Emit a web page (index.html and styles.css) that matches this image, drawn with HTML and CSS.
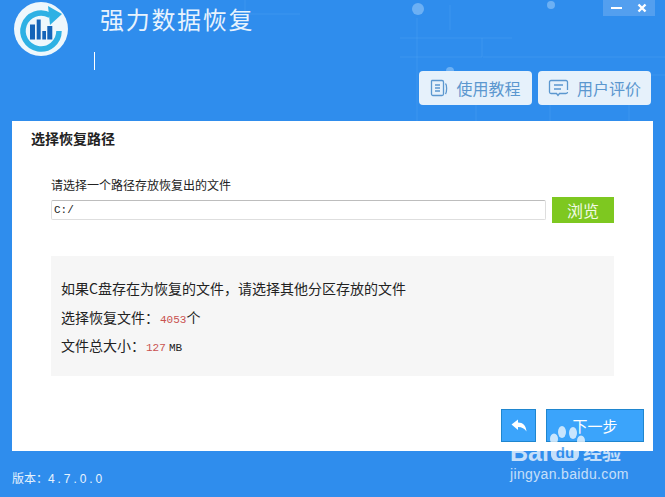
FILE: index.html
```html
<!DOCTYPE html>
<html lang="zh-CN">
<head>
    <meta charset="UTF-8">
    <title>强力数据恢复</title>
    <link rel="stylesheet" href="styles.css">
</head>
<body>
    <div class="app">
        <!-- background circuit lines -->
        <svg class="header-bg" width="665" height="121" viewBox="0 0 665 121" fill="none">
            <g stroke="#5aa6f2" stroke-width="1" opacity="0.35">
                <path d="M417 18V121M400 38H512M400 57H482V38M483 57H665M450 5V30M650 75H665M476 105V121M550 105V121M629 105V121M245 0V14H300"/>
            </g>
            <circle cx="418" cy="9" r="6" fill="#6cb0f4"/>
            <circle cx="551" cy="5" r="4" fill="#6cb0f4"/>
            <circle cx="450" cy="71" r="4" fill="#6cb0f4"/>
        </svg>
        <span class="spark"></span>

        <header class="top">
            <div class="brand">
                <svg class="logo" width="54" height="54" viewBox="0 0 54 54">
                    <circle cx="27" cy="27" r="27" fill="#eef7fc"/>
                    <path d="M45 29A18 18 0 1 1 36 13.400" fill="none" stroke="#2eb1e4" stroke-width="5.500"/>
                    <path d="M34 4L48 12L36 23Z" fill="#2eb1e4"/>
                    <path d="M16 22.500h5v15h-5zM22.700 17.500h4v20h-4zM28.300 29h3.700v8.500h-3.700zM33.300 24h5v13.500h-5z" fill="#1464b8"/>
                </svg>
                <h1>强力数据恢复</h1>
            </div>
            <div class="top-right">
                <div class="win-btns">
                    <span class="win-min"></span>
                    <svg width="10" height="10" viewBox="0 0 10 10">
                        <path d="M1.500 1.500L8.500 8.500M8.500 1.500L1.500 8.500" stroke="#fff" stroke-width="2.400"/>
                    </svg>
                </div>
                <div class="top-links">
                    <a class="top-link">
                        <svg width="18" height="18" viewBox="0 0 18 18" fill="none" stroke="#5b97cf" stroke-width="1.300">
                            <path d="M2 1.500H12A1.500 1.500 0 0 1 13.500 3V15A1.500 1.500 0 0 1 12 16.500H3A1.500 1.500 0 0 1 1.500 15V2Z"/>
                            <path d="M5 6H10M5 9H10M5 12H10M15.500 4.500C17 6 17 13 15.500 15"/>
                        </svg>
                        使用教程
                    </a>
                    <a class="top-link">
                        <svg width="21" height="18" viewBox="0 0 21 18" fill="none" stroke="#5b97cf" stroke-width="1.300">
                            <path d="M19.500 11V3A1.500 1.500 0 0 0 18 1.500H3A1.500 1.500 0 0 0 1.500 3V13A1.500 1.500 0 0 0 3 14.500H8.500L10 16.500L11.500 14.500H18A1.500 1.500 0 0 0 19.500 13"/>
                            <path d="M6 6H15M6 10H13"/>
                        </svg>
                        用户评价
                    </a>
                </div>
            </div>
        </header>

        <main class="panel">
            <h2>选择恢复路径</h2>
            <section class="path-section">
                <label class="path-label">请选择一个路径存放恢复出的文件</label>
                <div class="path-row">
                    <div class="path-input">C:/</div>
                    <button class="browse-btn">浏览</button>
                </div>
            </section>
            <section class="info-box">
                <p>如果C盘存在为恢复的文件，请选择其他分区存放的文件</p>
                <p>选择恢复文件：<span class="num">4053</span>个</p>
                <p>文件总大小：<span class="num">127</span> <span class="unit">MB</span></p>
            </section>
            <div class="actions">
                <button class="btn back-btn">
                    <svg width="16" height="13" viewBox="0 0 16 13">
                        <path d="M0.500 5.500L7 0.500V3.500C12 3.500 15 6.500 15.500 12.500C13.500 9.500 11 8 7 8V11Z" fill="#fff"/>
                    </svg>
                </button>
                <button class="btn next-btn">下一步</button>
            </div>
        </main>

        <footer class="bottom">版本：<span class="version">4.7.0.0</span></footer>

        <!-- watermark -->
        <div class="watermark">
            <svg class="paw" width="40" height="24" viewBox="0 0 40 24" fill="#fff">
                <ellipse cx="6" cy="14" rx="4" ry="5.500"/>
                <ellipse cx="14" cy="7" rx="4" ry="6"/>
                <ellipse cx="25" cy="8" rx="4" ry="6"/>
                <ellipse cx="33" cy="16" rx="4" ry="5.500"/>
            </svg>
            <div class="wm-logo">Bai<b>du</b><span>经验</span></div>
            <div class="wm-url">jingyan.baidu.com</div>
        </div>
    </div>
</body>
</html>
```

FILE: styles.css
```css
body {
    margin: 0;
    font-family: "Noto Sans CJK SC", "Liberation Sans", sans-serif;
}

.app {
    position: relative;
    width: 665px;
    height: 497px;
    overflow: hidden;
    background: #2f8ded;
    display: flex;
    flex-direction: column;
}

.header-bg {
    position: absolute;
    top: 0;
    left: 0;
}

.spark {
    position: absolute;
    left: 94px;
    top: 52px;
    width: 1px;
    height: 18px;
    background: #fff;
}

/* header */
.top {
    position: relative;
    height: 121px;
    display: flex;
    justify-content: space-between;
}

.brand {
    display: flex;
    align-items: flex-start;
    padding: 2px 0 0 14px;
}

.logo {
    flex: none;
}

.brand h1 {
    margin: 0 0 0 32px;
    font-size: 24px;
    line-height: 34px;
    font-weight: 400;
    letter-spacing: 1.700px;
    color: #e8f3fd;
}

.top-right {
    display: flex;
    flex-direction: column;
    align-items: flex-end;
    padding-right: 14px;
}

.win-btns {
    width: 52px;
    height: 16px;
    margin-right: -4px;
    padding: 0 6px 0 8px;
    box-sizing: border-box;
    display: flex;
    align-items: center;
    justify-content: space-between;
    background: #539fef;
}

.win-min {
    width: 11px;
    height: 2px;
    background: #fff;
}

.win-btns svg {
    margin-right: 2px;
}

.top-links {
    display: flex;
    gap: 6px;
    margin-top: 55px;
}

.top-link {
    width: 113px;
    height: 34px;
    display: flex;
    align-items: center;
    justify-content: center;
    gap: 8px;
    background: #e6f1fb;
    border-radius: 4px;
    font-size: 16px;
    color: #5b97cf;
}

/* white panel */
.panel {
    position: relative;
    width: 641px;
    height: 330px;
    margin-left: 12px;
    box-sizing: border-box;
    padding: 8px 9px 0 39px;
    background: #fff;
    color: #222;
}

.panel h2 {
    margin: 0 0 0 -20px;
    font-size: 14px;
    line-height: 18px;
    font-weight: 700;
}

.path-section {
    margin-top: 30px;
}

.path-label {
    display: block;
    font-size: 12px;
    line-height: 16px;
}

.path-row {
    display: flex;
    align-items: center;
    gap: 6px;
    margin-top: 4px;
}

.path-input {
    width: 495px;
    height: 20px;
    box-sizing: border-box;
    padding-left: 2px;
    border: 1px solid #dedede;
    border-top-color: #bdbdbd;
    border-radius: 2px;
    font-family: "Liberation Mono", monospace;
    font-size: 11px;
    line-height: 18px;
}

.browse-btn {
    width: 62px;
    height: 26px;
    padding: 0;
    border: none;
    background: #7ec820;
    color: #f2fae6;
    font-family: inherit;
    font-size: 16px;
}

.info-box {
    width: 563px;
    height: 120px;
    margin-top: 33px;
    box-sizing: border-box;
    padding: 18px 10px 0;
    background: #f6f6f6;
    font-size: 14px;
}

.info-box p {
    margin: 0;
    height: 28.500px;
    line-height: 28.500px;
}

.num {
    margin-left: 1px;
    color: #c9524f;
    font-family: "Liberation Mono", monospace;
    font-size: 11px;
}

.unit {
    font-family: "Liberation Mono", monospace;
    font-size: 11px;
}

.actions {
    display: flex;
    gap: 10px;
    margin: 33px 0 0 450px;
}

.btn {
    height: 33px;
    padding: 0;
    border: 1px solid #1f86cf;
    background: #3ba4fb;
    color: #fff;
    font-family: inherit;
    font-size: 15px;
    display: flex;
    align-items: center;
    justify-content: center;
}

.back-btn {
    width: 35px;
}

.next-btn {
    width: 98px;
}

/* footer */
.bottom {
    padding: 18px 0 0 12px;
    font-size: 12px;
    line-height: 18px;
    color: #e8f3fd;
}

.version {
    font-family: "Liberation Sans", sans-serif;
    letter-spacing: 2.900px;
}

/* baidu watermark */
.watermark {
    position: absolute;
    left: 510px;
    top: 424px;
    width: 122px;
    color: #fff;
    opacity: 0.72;
}

.paw {
    position: absolute;
    left: 38px;
    top: 1px;
}

.wm-logo {
    margin-top: 16px;
    display: flex;
    align-items: center;
    font-family: "Liberation Sans", sans-serif;
    font-size: 25px;
    line-height: 24px;
    font-weight: 700;
    white-space: nowrap;
}

.wm-logo b {
    width: 28px;
    height: 15px;
    margin: 3px 0 0 2px;
    background: #fff;
    border-radius: 6px;
    color: #2f8ded;
    font-size: 15px;
    line-height: 14px;
    text-align: center;
}

.wm-logo span {
    margin-left: 4px;
    font-family: "Noto Sans CJK SC", sans-serif;
    font-size: 19px;
    font-weight: 700;
}

.wm-url {
    margin-top: 2px;
    font-family: "Liberation Sans", sans-serif;
    font-size: 14px;
    line-height: 16px;
    letter-spacing: 0.350px;
}
```
